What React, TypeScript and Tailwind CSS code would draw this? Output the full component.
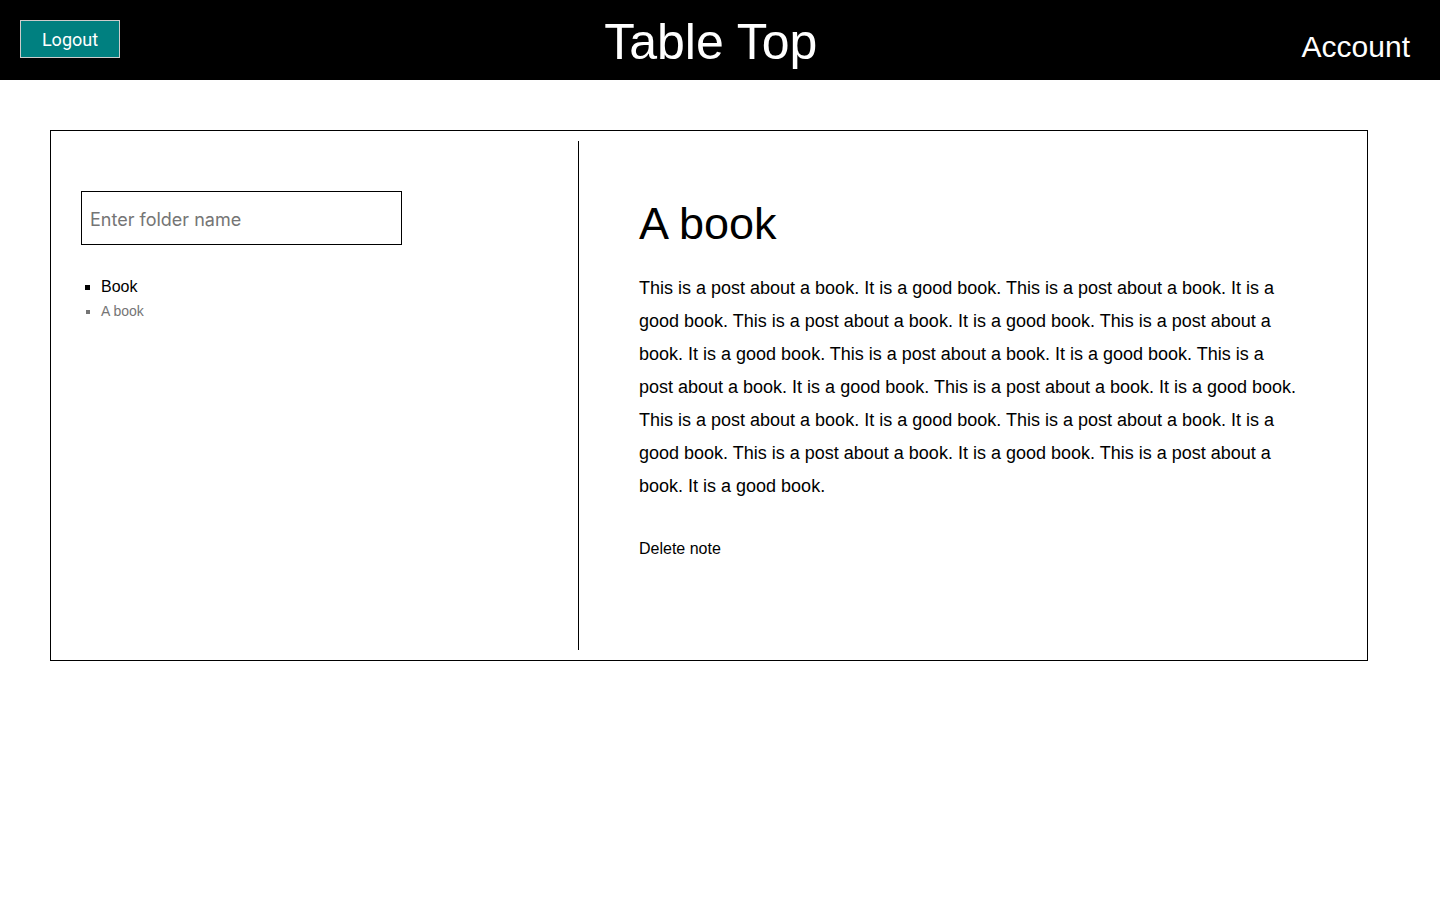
import React from "react";

const para =
  "This is a post about a book. It is a good book. This is a post about a book. It is a good book. This is a post about a book. It is a good book. This is a post about a book. It is a good book. This is a post about a book. It is a good book. This is a post about a book. It is a good book. This is a post about a book. It is a good book. This is a post about a book. It is a good book. This is a post about a book. It is a good book. This is a post about a book. It is a good book. This is a post about a book. It is a good book.";

export default function App() {
  return (
    <div className="min-h-[900px] bg-white font-['Liberation_Sans',Arial,sans-serif] text-black">
      <header className="h-[80px] bg-black flex items-center justify-between">
        <button className="ml-[20px] mt-[-2px] w-[100px] h-[38px] bg-[#008080] border border-[#cccccc] text-white text-[18px] font-['Roboto',sans-serif]">
          Logout
        </button>
        <h1 className="mt-[4px] text-white text-[50px] leading-[58px]">Table Top</h1>
        <div className="mr-[30px] mt-[14px] text-white text-[30px] leading-[34px]">Account</div>
      </header>

      <main className="ml-[50px] mt-[50px] w-[1318px] h-[531px] border border-black py-[10px] flex">
        <section className="w-[527px] px-[30px] pt-[50px]">
          <input
            placeholder="Enter folder name"
            className="w-[321px] h-[54px] border border-black px-[8px] pt-[2px] text-[18px] font-['Inter',sans-serif] placeholder:text-[#757575] outline-none"
          />
          <ul className="list-[square] pl-[20px] mt-[31px]">
            <li className="text-[16px] leading-[22px]">Book</li>
            <li className="text-[14px] leading-[20px] mt-[3px] text-[#757575] marker:text-[#757575]">A book</li>
          </ul>
        </section>
        <section className="flex-1 border-l border-black pl-[60px] pt-[58px]">
          <h2 className="text-[45px] leading-[50px]">A book</h2>
          <p className="mt-[23px] w-[660px] text-[18px] leading-[33px]">{para}</p>
          <div className="mt-[37px] text-[16px] leading-[18px]">Delete note</div>
        </section>
      </main>
    </div>
  );
}
